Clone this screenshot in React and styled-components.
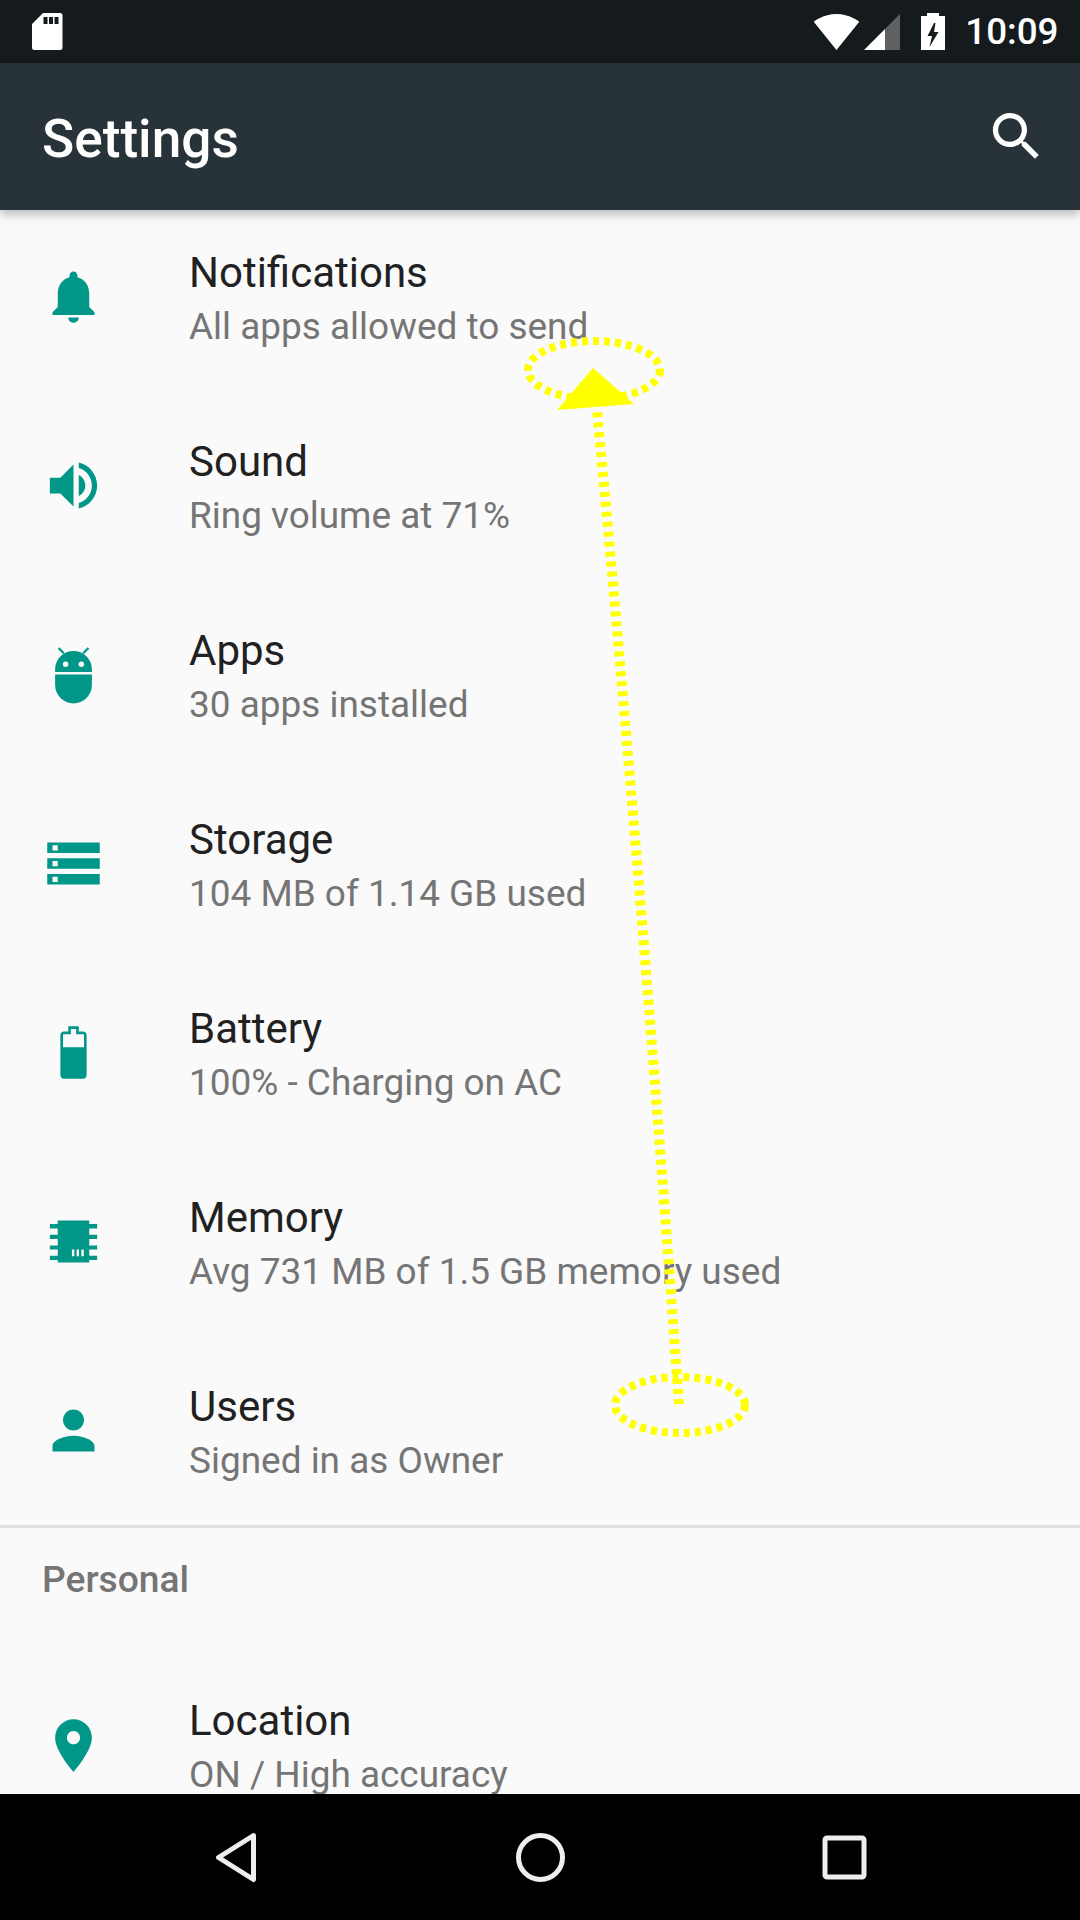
import styled, { createGlobalStyle } from "styled-components";

const TEAL = "#009688";

const GlobalStyle = createGlobalStyle`
  html, body {
    margin: 0;
    padding: 0;
    background: #000;
  }
  * {
    box-sizing: border-box;
  }
`;

const ICON_PATHS = {
  bell: "M12 22c1.1 0 2-.9 2-2h-4c0 1.1.89 2 2 2zm6-6v-5c0-3.07-1.64-5.64-4.5-6.32V4c0-.83-.67-1.5-1.5-1.5s-1.5.67-1.5 1.5v.68C7.63 5.36 6 7.92 6 11v5l-2 2v1h16v-1l-2-2z",
  sound:
    "M3 9v6h4l5 5V4L7 9H3zm13.5 3c0-1.77-1.02-3.29-2.5-4.03v8.05c1.48-.73 2.5-2.25 2.5-4.02zM14 3.23v2.06c2.89.86 5 3.54 5 6.71s-2.11 5.85-5 6.71v2.06c4.01-.91 7-4.49 7-8.77s-2.99-7.86-7-8.77z",
  android:
    "M5 11v-1a7 7 0 0 1 14 0v1H5zm4-4a1.05 1.05 0 1 0 0 2.1A1.05 1.05 0 0 0 9 7zm6 0a1.05 1.05 0 1 0 0 2.1A1.05 1.05 0 0 0 15 7zM5 12h14v4a7 7 0 0 1-14 0v-4zM6.6 1.6l2 2-.6.6-2-2 .6-.6zM17.4 1.6l.6.6-2 2-.6-.6 2-2z",
  storage:
    "M2 20h20v-4H2v4zm2-3h2v2H4v-2zM2 4v4h20V4H2zm4 3H4V5h2v2zm-4 7h20v-4H2v4zm2-3h2v2H4v-2z",
  battery:
    "M15.67 4H14V2h-4v2H8.33C7.6 4 7 4.6 7 5.33v15.34C7 21.4 7.6 22 8.33 22h7.33c.74 0 1.34-.6 1.34-1.33V5.33C17 4.6 16.4 4 15.67 4zM8 10V5h3V3h2v2h3v5H8z",
  memory:
    "M6 4h12v1.3h3V7h-3v2.4h3V11h-3v2.5h3V15h-3v2.4h3V19h-3v1H6v-1H3v-1.6h3V15H3v-1.5h3V11H3V9.4h3V7H3V5.3h3V4zm5.4 11v2.6h.9V15h-.9zm1.8 0v2.6h.9V15h-.9zm1.8 0v2.6h.9V15h-.9z",
  person:
    "M12 12c2.21 0 4-1.79 4-4s-1.79-4-4-4-4 1.79-4 4 1.79 4 4 4zm0 2c-2.67 0-8 1.34-8 4v2h16v-2c0-2.66-5.33-4-8-4z",
  location:
    "M12 2C8.13 2 5 5.13 5 9c0 5.25 7 13 7 13s7-7.75 7-13c0-3.87-3.13-7-7-7zm0 9.5c-1.38 0-2.5-1.12-2.5-2.5s1.12-2.5 2.5-2.5 2.5 1.12 2.5 2.5-1.12 2.5-2.5 2.5z",
};

const DEVICE_ITEMS = [
  { icon: "bell", title: "Notifications", summary: "All apps allowed to send" },
  { icon: "sound", title: "Sound", summary: "Ring volume at 71%" },
  { icon: "android", title: "Apps", summary: "30 apps installed" },
  { icon: "storage", title: "Storage", summary: "104 MB of 1.14 GB used" },
  { icon: "battery", title: "Battery", summary: "100% - Charging on AC" },
  { icon: "memory", title: "Memory", summary: "Avg 731 MB of 1.5 GB memory used" },
  { icon: "person", title: "Users", summary: "Signed in as Owner" },
];

export default function App() {
  return (
    <Screen>
      <GlobalStyle />
      <StatusBar />
      <Toolbar>
        <ToolbarTitle>Settings</ToolbarTitle>
        <SearchIcon viewBox="0 0 24 24">
          <path d="M15.5 14h-.79l-.28-.27C15.41 12.59 16 11.11 16 9.5 16 5.91 13.09 3 9.5 3S3 5.91 3 9.5 5.91 16 9.5 16c1.61 0 3.09-.59 4.23-1.57l.27.28v.79l5 4.99L20.49 19l-4.99-5zm-6 0C7.01 14 5 11.99 5 9.5S7.01 5 9.5 5 14 7.01 14 9.5 11.99 14 9.5 14z" />
        </SearchIcon>
      </Toolbar>
      <Content>
        <List>
          {DEVICE_ITEMS.map((item) => (
            <SettingRow key={item.title} {...item} />
          ))}
          <Divider />
          <CategoryTitle>Personal</CategoryTitle>
          <SettingRow
            icon="location"
            title="Location"
            summary="ON / High accuracy"
          />
        </List>
      </Content>
      <NavBar />
      <SwipeGesture />
    </Screen>
  );
}

function SettingRow({ icon, title, summary }) {
  return (
    <Row>
      <RowIcon viewBox="0 0 24 24">
        <path fillRule="evenodd" d={ICON_PATHS[icon]} />
      </RowIcon>
      <RowText>
        <RowTitle>{title}</RowTitle>
        <RowSummary>{summary}</RowSummary>
      </RowText>
    </Row>
  );
}

function StatusBar() {
  return (
    <StatusWrapper>
      <svg width="31" height="37" viewBox="0 0 31 37">
        <path
          fill="#fff"
          fillRule="evenodd"
          d="M11 0h17a2.5 2.5 0 0 1 2.5 2.5v32a2.5 2.5 0 0 1-2.5 2.5H2.5A2.5 2.5 0 0 1 0 34.5V11L11 0zM11.5 4v7h4V4h-4zm5.5 0v7h4V4h-4zm5.5 0v7h4V4h-4z"
        />
      </svg>
      <StatusRight>
        <svg width="47" height="47" viewBox="0 0 24 24">
          <path
            fill="#fff"
            d="M12.01 21.49L23.64 7c-.45-.34-4.93-4-11.64-4C5.28 3 .81 6.66.36 7l11.63 14.49.01.01.01-.01z"
          />
        </svg>
        <SignalIcon width="36" height="36" viewBox="0 0 36 36">
          <path fill="#5f6163" d="M21 36h15V0L21 15z" />
          <path fill="#fff" d="M0 36h21V15z" />
        </SignalIcon>
        <BatteryIcon width="24" height="37" viewBox="0 0 24 37">
          <path
            fill="#fff"
            fillRule="evenodd"
            d="M6 0h12v3h6v34H0V3h6V0zm7 10L6.5 23H11l-2.5 11L17.5 19H13l1.5-9H13z"
          />
        </BatteryIcon>
        <Clock>10:09</Clock>
      </StatusRight>
    </StatusWrapper>
  );
}

function NavBar() {
  return (
    <NavWrapper>
      <NavIcon viewBox="0 0 63 63">
        <path d="M48.5 9.5 13.5 31.5 48.5 53.5z" />
      </NavIcon>
      <NavIcon viewBox="0 0 63 63">
        <circle cx="31.5" cy="31.5" r="22" />
      </NavIcon>
      <NavIcon viewBox="0 0 63 63">
        <rect x="12" y="12" width="39" height="39" rx="2" />
      </NavIcon>
    </NavWrapper>
  );
}

function SwipeGesture() {
  return (
    <GestureOverlay viewBox="0 0 1080 1920">
      <GestureEllipse cx="594" cy="370" rx="66" ry="29" />
      <GestureEllipse cx="680" cy="1405" rx="65" ry="28" />
      <GestureLine d="M679 1404 Q 643 900 597 410" />
      <path fill="#ffff00" d="M593 368 L557 410 L634 404z" />
    </GestureOverlay>
  );
}

const Screen = styled.div`
  position: relative;
  width: 1080px;
  height: 1920px;
  display: flex;
  flex-direction: column;
  overflow: hidden;
  background: #fafafa;
  font-family: Roboto, "Liberation Sans", sans-serif;
`;

const StatusWrapper = styled.div`
  height: 63px;
  flex: none;
  display: flex;
  align-items: center;
  justify-content: space-between;
  padding: 0 21.5px 0 32px;
  background: #151a1d;
  position: relative;
  z-index: 2;
`;

const StatusRight = styled.div`
  display: flex;
  align-items: center;
`;

const SignalIcon = styled.svg`
  margin-left: 4px;
`;

const BatteryIcon = styled.svg`
  margin-left: 21px;
`;

const Clock = styled.span`
  margin-left: 20.5px;
  color: #fff;
  font-size: 36.75px;
  font-weight: 500;
  line-height: 63px;
`;

const Toolbar = styled.header`
  height: 147px;
  flex: none;
  display: flex;
  align-items: center;
  justify-content: space-between;
  padding: 0 32.5px 0 42px;
  background: #283339;
  box-shadow: 0 4px 10px rgba(0, 0, 0, 0.28);
  position: relative;
  z-index: 2;
`;

const ToolbarTitle = styled.h1`
  margin: 0;
  padding-top: 5px;
  color: #fff;
  font-size: 53.2px;
  font-weight: 500;
  line-height: 63px;
`;

const SearchIcon = styled.svg`
  width: 63px;
  height: 63px;
  fill: #fff;
`;

const Content = styled.main`
  flex: 1;
  min-height: 0;
  overflow: hidden;
`;

const List = styled.div`
  margin-top: -8px;
`;

const Row = styled.div`
  height: 189px;
  display: flex;
  align-items: center;
`;

const RowIcon = styled.svg`
  width: 63px;
  height: 63px;
  flex: none;
  margin: 0 84px 0 42px;
  fill: ${TEAL};
`;

const RowText = styled.div`
  padding-top: 2px;
`;

const RowTitle = styled.div`
  color: #212121;
  font-size: 42px;
  line-height: 58px;
`;

const RowSummary = styled.div`
  color: #757575;
  font-size: 36.95px;
  line-height: 50px;
`;

const Divider = styled.hr`
  height: 3px;
  margin: 0;
  border: none;
  background: #e0e0e0;
`;

const CategoryTitle = styled.div`
  height: 122.5px;
  padding: 26px 0 0 42px;
  color: #757575;
  font-size: 37.2px;
  font-weight: 500;
  line-height: 50px;
`;

const NavWrapper = styled.nav`
  height: 126px;
  flex: none;
  display: flex;
  align-items: center;
  justify-content: center;
  gap: 241px;
  background: #000;
  position: relative;
  z-index: 2;
`;

const NavIcon = styled.svg`
  width: 63px;
  height: 63px;
  fill: none;
  stroke: #eeeeee;
  stroke-width: 5px;
  stroke-linejoin: round;
`;

const GestureOverlay = styled.svg`
  position: absolute;
  inset: 0;
  width: 1080px;
  height: 1920px;
  z-index: 3;
  pointer-events: none;
`;

const GestureEllipse = styled.ellipse`
  fill: none;
  stroke: #ffff00;
  stroke-width: 8px;
  stroke-dasharray: 6 5;
`;

const GestureLine = styled.path`
  fill: none;
  stroke: #ffff00;
  stroke-width: 10px;
  stroke-dasharray: 5 5;
`;
